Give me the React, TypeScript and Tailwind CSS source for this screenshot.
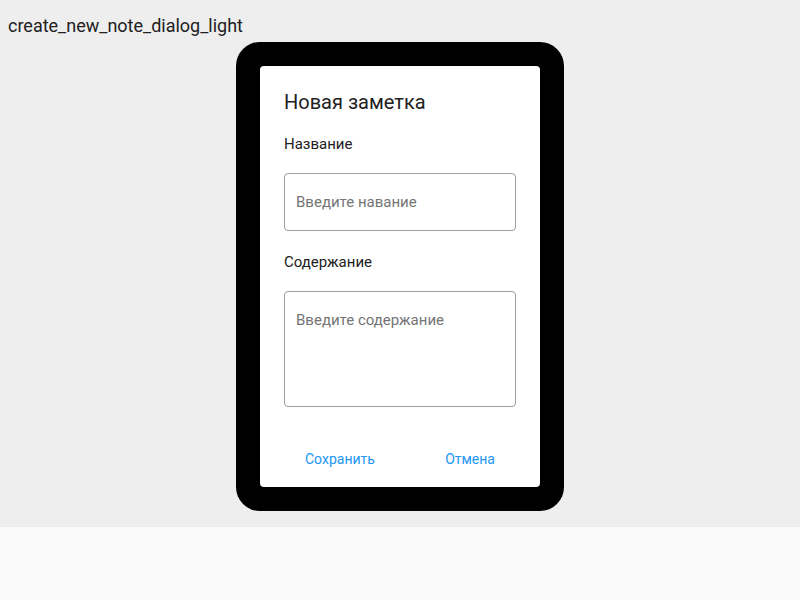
import React from "react";

const font = { fontFamily: "Roboto, 'Noto Sans', sans-serif" };

const NoteDialog: React.FC = () => {
  return (
    <div className="flex w-[280px] flex-col rounded bg-white">
      <div className="px-6 pt-[22px]">
        <h2 className="text-[20px] leading-[28px] text-[#212121]">Новая заметка</h2>

        {/* Title field */}
        <label className="mt-[18px] block text-[15px] leading-[20px] text-[#212121]">Название</label>
        <div className="mt-[19px] flex h-[58px] items-center rounded border border-[#9e9e9e] px-[11px]">
          <span className="text-[15px] leading-[20px] text-[#757575]">Введите навание</span>
        </div>

        {/* Content field */}
        <label className="mt-[21px] block text-[15px] leading-[20px] text-[#212121]">Содержание</label>
        <div className="mt-[19px] h-[116px] rounded border border-[#9e9e9e] px-[11px] pt-[16px]">
          <span className="text-[15px] leading-[20px] text-[#757575]">Введите содержание</span>
        </div>
      </div>

      <div className="mt-[42px] mb-[18px] flex justify-between px-[45px]">
        <button className="text-[14px] leading-[20px] text-[#2196f3]">Сохранить</button>
        <button className="text-[14px] leading-[20px] text-[#2196f3]">Отмена</button>
      </div>
    </div>
  );
};

export default function App() {
  return (
    <div className="min-h-[600px] w-[800px] bg-[#fafafa]" style={font}>
      <div className="flex h-[527px] flex-col bg-[#eeeeee] pt-[14px]">
        <div className="px-2 text-[18px] leading-[24px] text-[#212121]">create_new_note_dialog_light</div>
        <div className="mt-1 flex justify-center">
          <div className="rounded-[24px] bg-black p-6">
            <NoteDialog />
          </div>
        </div>
      </div>
    </div>
  );
}
